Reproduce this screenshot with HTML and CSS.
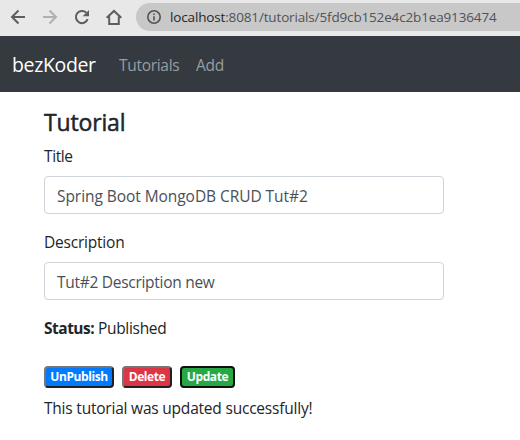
FILE: index.html
```html
<!DOCTYPE html>
<html lang="en">
<head>
<meta charset="utf-8">
<title>Tutorial</title>
<link rel="stylesheet" href="styles.css">
</head>
<body>
<div class="toolbar">
  <svg class="icon" viewBox="0 0 16 16"><path d="M15 8H2.500M8.500 1.500L2 8l6.500 6.500"/></svg>
  <svg class="icon disabled" viewBox="0 0 16 16"><path d="M1 8h12.500M7.500 1.500L14 8l-6.500 6.500"/></svg>
  <svg class="icon" viewBox="0 0 16 16"><path d="M13.700 10.200A6.100 6.100 0 1 1 12.300 3.700"/><path class="solid" d="M15 1v6.300H8.700z"/></svg>
  <svg class="icon" viewBox="0 0 16 16"><path d="M.7 8.700L8 1.900l7.300 6.800M3.200 7.500v7.500h9.600V7.500"/></svg>
  <div class="address">
    <svg class="info" viewBox="0 0 14 14"><circle cx="7" cy="7" r="6.200"/><path d="M7 6.200v4.300M7 3.400v1.600"/></svg>
    <span class="url"><span class="host">localhost</span>:8081/tutorials/5fd9cb152e4c2b1ea9136474</span>
  </div>
</div>
<nav class="navbar">
  <a class="brand">bezKoder</a>
  <a class="link tutorials">Tutorials</a>
  <a class="link">Add</a>
</nav>
<main class="container">
  <h4>Tutorial</h4>
  <div class="group">
    <label class="title-label">Title</label>
    <div class="control first">Spring Boot MongoDB CRUD Tut#2</div>
  </div>
  <div class="group">
    <label>Description</label>
    <div class="control">Tut#2 Description new</div>
  </div>
  <div class="status"><strong>Status:</strong> <span>Published</span></div>
  <div class="actions">
    <button class="badge primary">UnPublish</button>
    <button class="badge danger">Delete</button>
    <button class="badge success">Update</button>
  </div>
  <p class="message">This tutorial was updated successfully!</p>
</main>
</body>
</html>
```
FILE: styles.css
```css
* { box-sizing: border-box; }
body {
  margin: 0;
  background: #fff;
  color: #212529;
  font: 15.5px/24px "Open Sans", "Noto Sans", sans-serif;
  letter-spacing: -0.21px;
  white-space: nowrap;
  overflow: hidden;
}
.toolbar {
  height: 36px;
  padding: 3px 0 5px 10px;
  display: flex;
  align-items: center;
  gap: 16px;
  background: #e8e8e8;
}
.icon {
  flex: none;
  width: 16px;
  height: 16px;
  fill: none;
  stroke: #5a5e63;
  stroke-width: 2;
}
.disabled { stroke: #b0b0b0; }
.icon .solid { fill: #5a5e63; stroke: none; }
.address {
  flex: 1;
  height: 28px;
  margin-left: -2px;
  padding-left: 11px;
  display: flex;
  align-items: center;
  gap: 9px;
  border-radius: 14px 0 0 14px;
  background: #c8c8c8;
}
.info { width: 14px; height: 14px; fill: none; stroke: #505358; stroke-width: 1.6; }
.url { font-size: 13.5px; letter-spacing: -0.15px; color: #505358; }
.host { color: #25272a; }
.navbar {
  height: 56px;
  padding: 2px 12px 0;
  display: flex;
  align-items: center;
  background: #343a40;
}
.brand { width: 107px; font-size: 19.5px; letter-spacing: -0.35px; color: #fff; }
.link { color: #999da0; }
.tutorials { width: 77px; letter-spacing: -0.3px; }
.container { width: 444px; padding: 16px 0 0 44px; }
h4 {
  margin: 0 0 8px;
  font-size: 23px;
  font-weight: 500;
  line-height: 28px;
  letter-spacing: -0.15px;
  -webkit-text-stroke: 0.5px #212529;
}
.group { margin-bottom: 16px; }
label { display: block; margin-bottom: 8px; }
.title-label { letter-spacing: -0.4px; }
.control {
  height: 38px;
  padding: 7px 12px;
  border: 1px solid #ced4da;
  border-radius: 4px;
  color: #495057;
  letter-spacing: -0.28px;
}
.first { letter-spacing: -0.06px; }
.status { height: 24px; letter-spacing: -0.3px; }
.status strong { letter-spacing: -0.5px; }
.actions { display: flex; gap: 8px; margin-top: 26px; }
.badge {
  height: 22px;
  padding: 0;
  border: 2px outset #767676;
  border-radius: 4px;
  color: #fff;
  font: 700 12px/18px "Open Sans", "Noto Sans", sans-serif;
  letter-spacing: -0.42px;
}
.primary { width: 70px; background: #007bff; }
.danger { width: 50px; background: #dc3545; }
.success { width: 55px; background: #28a745; border: 2px solid #101010; }
.message { margin: 8px 0 0; }
```
